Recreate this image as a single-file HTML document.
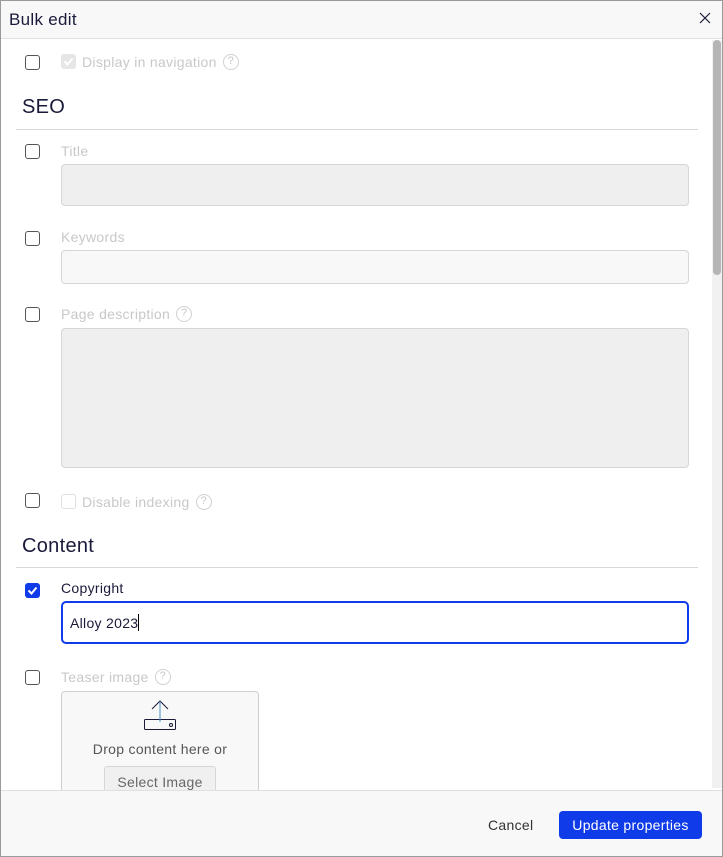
<!DOCTYPE html>
<html><head><style>
*{box-sizing:border-box;margin:0;padding:0}
html,body{width:723px;height:857px;overflow:hidden;background:#fff;font-family:"Liberation Sans",sans-serif;letter-spacing:0.3px}
.frame{position:absolute;left:0;top:0;width:723px;height:857px;border:1px solid #9a9a9a}
.a{position:absolute}
.hdr{left:1px;top:1px;width:721px;height:38px;background:#f8f8f8;border-bottom:1px solid #e0e0e0}
.cb{position:absolute;width:15px;height:15px;border:1.3px solid #555;border-radius:3px;background:#fff}
.lbl{position:absolute;font-size:14px;color:#c8c8c8;display:flex;align-items:center;height:17px}
.q{display:inline-block;width:16px;height:16px;border:1.3px solid #d0d0d0;border-radius:50%;font-size:11px;line-height:13px;text-align:center;color:#c8c8c8;margin-left:6px;letter-spacing:0}
.h{position:absolute;left:22px;font-size:20px;color:#1a1a3a}
.line{position:absolute;left:16px;width:682px;height:1px;background:#d8d8d8}
.inp{position:absolute;left:61px;width:628px;border:1px solid #d6d6d6;border-radius:4px;background:#efefef}
</style></head><body>
<div class="frame"></div>
<div class="a hdr"></div>
<div class="a" style="left:9px;top:10px;font-size:17px;color:#1a1a3a">Bulk edit</div>
<svg class="a" style="left:699px;top:12px" width="12" height="12"><path d="M1 1L11 11M11 1L1 11" stroke="#1a1a3a" stroke-width="1.2"/></svg>
<div class="a" style="left:712px;top:40px;width:10px;height:748px;background:#f1f1f1"></div>
<div class="a" style="left:713px;top:40px;width:8px;height:235px;background:#b5b5b5;border-radius:4px"></div>

<div class="cb" style="left:25px;top:55px"></div>
<div class="a" style="left:61px;top:54px;width:15px;height:15px;background:#e6e6e6;border-radius:3px"><svg width="15" height="15"><path d="M3.5 7.5L6.5 10.5L11.5 4.5" stroke="#fff" stroke-width="2" fill="none"/></svg></div>
<div class="lbl" style="left:82px;top:53px">Display in navigation<span class="q">?</span></div>

<div class="h" style="top:96px">SEO</div>
<div class="line" style="top:129px"></div>

<div class="cb" style="left:25px;top:144px"></div>
<div class="lbl" style="left:61px;top:142px">Title</div>
<div class="inp" style="top:164px;height:42px"></div>

<div class="cb" style="left:25px;top:231px"></div>
<div class="lbl" style="left:61px;top:228px">Keywords</div>
<div class="inp" style="top:250px;height:34px;background:#f8f8f8"></div>

<div class="cb" style="left:25px;top:307px"></div>
<div class="lbl" style="left:61px;top:305px">Page description<span class="q">?</span></div>
<div class="inp" style="top:328px;height:140px"></div>

<div class="cb" style="left:25px;top:493px"></div>
<div class="a" style="left:61px;top:494px;width:15px;height:15px;border:1px solid #e0e0e0;border-radius:3px"></div>
<div class="lbl" style="left:82px;top:493px">Disable indexing<span class="q">?</span></div>

<div class="h" style="top:535px">Content</div>
<div class="line" style="top:567px"></div>

<div class="a" style="left:25px;top:583px;width:15px;height:15px;background:#0f3be8;border-radius:3px"><svg width="15" height="15"><path d="M3.5 7.5L6.5 10.5L11.5 4.5" stroke="#fff" stroke-width="2" fill="none"/></svg></div>
<div class="a" style="left:61px;top:580px;font-size:14px;color:#1a1a3a">Copyright</div>
<div class="a" style="left:61px;top:601px;width:628px;height:43px;border:2px solid #0f3be8;border-radius:5px"></div>
<div class="a" style="left:70px;top:614px;font-size:14px;color:#1a1a3a">Alloy 2023<span style="display:inline-block;width:1px;height:17px;background:#000;vertical-align:-3px"></span></div>

<div class="cb" style="left:25px;top:670px"></div>
<div class="lbl" style="left:61px;top:668px">Teaser image<span class="q">?</span></div>
<div class="a" style="left:61px;top:691px;width:198px;height:110px;border:1px solid #cfcfcf;border-radius:4px;background:#f8f8f8"></div>
<svg class="a" style="left:143px;top:699px" width="34" height="34"><path d="M17 2V23M9 10L17 2L25 10" stroke="#1a1a3a" stroke-width="1" fill="none"/><rect x="1.5" y="20.5" width="31" height="10" rx="1" stroke="#1a1a3a" fill="none"/><circle cx="28" cy="26" r="1.5" stroke="#1a1a3a" fill="none"/><path d="M17 2V23" stroke="#4a90c0"/></svg>
<div class="a" style="left:61px;top:741px;width:198px;text-align:center;font-size:14px;color:#555">Drop content here or</div>
<div class="a" style="left:104px;top:766px;width:112px;height:30px;border:1px solid #d6d6d6;border-radius:3px;background:#f0f0f0;text-align:center;font-size:14px;line-height:30px;color:#666">Select Image</div>

<div class="a" style="left:1px;top:790px;width:721px;height:66px;background:#f8f8f8;border-top:1px solid #e0e0e0"></div>
<div class="a" style="left:488px;top:817px;font-size:14px;color:#333">Cancel</div>
<div class="a" style="left:559px;top:811px;width:143px;height:28px;background:#0f3be8;border-radius:4px;color:#fff;font-size:14px;line-height:28px;text-align:center">Update properties</div>
</body></html>
